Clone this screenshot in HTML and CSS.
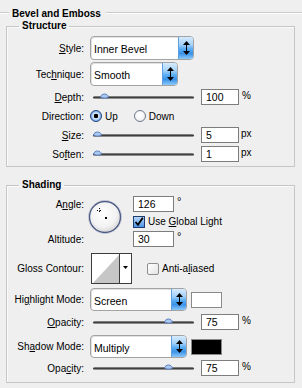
FILE: index.html
```html
<!DOCTYPE html>
<html>
<head>
<meta charset="utf-8">
<title>Bevel and Emboss</title>
<link rel="stylesheet" href="styles.css">
</head>
<body>
<div class="panel">
  <div class="section-title"><span class="lead"></span><span class="title">Bevel and Emboss</span><span class="rule"></span></div>

  <fieldset class="group structure">
    <legend>Structure</legend>

    <div class="row sel-row r-style">
      <span class="lbl"><u>S</u>tyle:</span>
      <div class="select w-style"><span class="val">Inner Bevel</span><span class="spin"><svg width="9" height="22" viewBox="0 0 9 22"><path d="M1 8 L4.5 4 L8 8 Z M1 14 L4.5 18 L8 14 Z" fill="#000"/><rect x="4" y="8" width="1" height="6" fill="#000"/></svg></span></div>
    </div>

    <div class="row sel-row r-tech">
      <span class="lbl">Tec<u>h</u>nique:</span>
      <div class="select w-tech"><span class="val">Smooth</span><span class="spin"><svg width="9" height="22" viewBox="0 0 9 22"><path d="M1 8 L4.5 4 L8 8 Z M1 14 L4.5 18 L8 14 Z" fill="#000"/><rect x="4" y="8" width="1" height="6" fill="#000"/></svg></span></div>
    </div>

    <div class="row r-depth">
      <span class="lbl"><u>D</u>epth:</span>
      <div class="slider"><span class="track"></span><svg class="thumb" style="left:7px" width="9" height="7" viewBox="0 0 9 7"><path d="M0.5 5 C1.5 1 7.5 1 8.5 5 C7 6.5 2 6.5 0.5 5 Z" fill="#a9c7ef" stroke="#5b7fbf" stroke-width="1"/></svg></div>
      <span class="num">100</span><span class="unit">%</span>
    </div>

    <div class="row r-dir">
      <span class="lbl">Direction:</span>
      <span class="radio on"></span><span class="rtext">Up</span>
      <span class="radio off"></span><span class="rtext">Down</span>
    </div>

    <div class="row r-size">
      <span class="lbl"><u>S</u>ize:</span>
      <div class="slider"><span class="track"></span><svg class="thumb" style="left:0px" width="9" height="7" viewBox="0 0 9 7"><path d="M0.5 5 C1.5 1 7.5 1 8.5 5 C7 6.5 2 6.5 0.5 5 Z" fill="#a9c7ef" stroke="#5b7fbf" stroke-width="1"/></svg></div>
      <span class="num">5</span><span class="unit px">px</span>
    </div>

    <div class="row r-soften">
      <span class="lbl">So<u>f</u>ten:</span>
      <div class="slider"><span class="track"></span><svg class="thumb" style="left:0px" width="9" height="7" viewBox="0 0 9 7"><path d="M0.5 5 C1.5 1 7.5 1 8.5 5 C7 6.5 2 6.5 0.5 5 Z" fill="#a9c7ef" stroke="#5b7fbf" stroke-width="1"/></svg></div>
      <span class="num">1</span><span class="unit px">px</span>
    </div>
  </fieldset>

  <fieldset class="group shading">
    <legend>Shading</legend>

    <div class="angle">
      <span class="lbl a-l1">A<u>n</u>gle:</span>
      <svg class="dial" width="34" height="34" viewBox="0 0 34 34">
        <defs>
          <radialGradient id="dg" cx="45%" cy="40%" r="60%">
            <stop offset="0" stop-color="#ffffff"/>
            <stop offset="0.7" stop-color="#f2f2f2"/>
            <stop offset="1" stop-color="#d6d6d6"/>
          </radialGradient>
        </defs>
        <circle cx="17" cy="17" r="15.6" fill="url(#dg)" stroke="#4d5b86" stroke-width="1.6"/>
        <circle cx="17" cy="17" r="16.6" fill="none" stroke="#c9cdd8" stroke-width="0.8"/>
        <g fill="#000">
          <rect x="11" y="8" width="1" height="1"/>
          <rect x="11" y="11" width="1" height="1"/>
          <rect x="9" y="10" width="1" height="1"/>
          <rect x="12" y="10" width="1" height="1"/>
          <rect x="11" y="10" width="1" height="1" fill="#777"/>
          <rect x="17" y="17" width="2" height="2"/>
        </g>
      </svg>
      <div class="a-r1"><span class="num n-angle">126</span><span class="deg">°</span></div>
      <div class="a-r2"><span class="check on"><svg width="10" height="10" viewBox="0 0 10 10"><path d="M1.5 5 L4 7.8 L8.8 0.8" fill="none" stroke="#000" stroke-width="1.8"/></svg></span><span class="ctext">Use <u>G</u>lobal Light</span></div>
      <span class="lbl a-l3">Altitude:</span>
      <div class="a-r3"><span class="num n-angle">30</span><span class="deg">°</span></div>
    </div>

    <div class="row r-gloss">
      <span class="lbl">Gloss Contour:</span>
      <svg class="contour" width="41" height="31" viewBox="0 0 41 31">
        <rect x="0.5" y="0.5" width="40" height="30" fill="#fff" stroke="#3c3c3c"/>
        <polygon points="2,30 28,2 28,30" fill="#c6c6c6"/>
        <line x1="28.5" y1="1" x2="28.5" y2="30" stroke="#3c3c3c"/>
        <polygon points="32,13 37,13 34.5,16" fill="#000"/>
      </svg>
      <span class="check off"></span><span class="ctext">Anti-a<u>l</u>iased</span>
    </div>

    <div class="row sel-row r-hmode">
      <span class="lbl">Hi<u>g</u>hlight Mode:</span>
      <div class="select w-mode"><span class="val">Screen</span><span class="spin"><svg width="9" height="21" viewBox="0 0 9 21"><path d="M1 8 L4.5 4 L8 8 Z M1 13 L4.5 17 L8 13 Z" fill="#000"/><rect x="4" y="8" width="1" height="5" fill="#000"/></svg></span></div>
      <span class="swatch white"></span>
    </div>

    <div class="row r-hop">
      <span class="lbl"><u>O</u>pacity:</span>
      <div class="slider"><span class="track"></span><svg class="thumb" style="left:71px" width="9" height="7" viewBox="0 0 9 7"><path d="M0.5 5 C1.5 1 7.5 1 8.5 5 C7 6.5 2 6.5 0.5 5 Z" fill="#a9c7ef" stroke="#5b7fbf" stroke-width="1"/></svg></div>
      <span class="num">75</span><span class="unit">%</span>
    </div>

    <div class="row sel-row r-smode">
      <span class="lbl">Sh<u>a</u>dow Mode:</span>
      <div class="select w-mode"><span class="val">Multiply</span><span class="spin"><svg width="9" height="21" viewBox="0 0 9 21"><path d="M1 8 L4.5 4 L8 8 Z M1 13 L4.5 17 L8 13 Z" fill="#000"/><rect x="4" y="8" width="1" height="5" fill="#000"/></svg></span></div>
      <span class="swatch black"></span>
    </div>

    <div class="row r-sop">
      <span class="lbl">Opa<u>c</u>ity:</span>
      <div class="slider"><span class="track"></span><svg class="thumb" style="left:71px" width="9" height="7" viewBox="0 0 9 7"><path d="M0.5 5 C1.5 1 7.5 1 8.5 5 C7 6.5 2 6.5 0.5 5 Z" fill="#a9c7ef" stroke="#5b7fbf" stroke-width="1"/></svg></div>
      <span class="num">75</span><span class="unit">%</span>
    </div>
  </fieldset>
</div>
</body>
</html>
```

FILE: styles.css
```css
* { box-sizing: border-box; }
html, body { margin: 0; padding: 0; }
body {
  width: 302px;
  height: 388px;
  background: #efefef;
  font-family: "Liberation Sans", Arial, sans-serif;
  font-size: 10px;
  color: #000;
  overflow: hidden;
}
u { text-decoration: underline; text-underline-offset: 1px; }

.panel { padding-top: 7px; }

.section-title { display: flex; align-items: center; height: 12px; }
.section-title .lead,
.section-title .rule {
  height: 2px;
  border-top: 1px solid #cbcbcb;
  border-bottom: 1px solid #ffffff;
}
.section-title .lead { width: 9px; margin-right: 3px; flex: none; }
.section-title .title { font-weight: bold; white-space: nowrap; }
.section-title .rule { flex: 1; margin-left: 5px; }

.group {
  margin: 1px 0 0 6px;
  width: 289px;
  min-width: 0;
  padding: 0 0 4px 0;
  border: 1px solid #c6c6c6;
  box-shadow: inset 1px 1px 0 #fafafa;
}
.group legend {
  font-weight: bold;
  line-height: 12px;
  padding: 0 3px;
  margin-left: 12px;
}
.group.shading { margin-top: 12px; padding-bottom: 6px; }

.row { display: flex; align-items: center; height: 16px; }
.lbl { width: 77px; flex: none; text-align: right; white-space: nowrap; }

/* select */
.sel-row { height: 24px; }
.select {
  display: flex;
  height: 24px;
  margin-left: 6px;
  border: 1px solid #a3a3a3;
  border-radius: 4px;
  background: #fff;
  overflow: hidden;
  box-shadow: inset 1px 1px 0 #e2e2e2;
}
.select .val { flex: 1; display: flex; align-items: center; padding: 2px 0 0 3px; font-size: 10.5px; }
.select .spin {
  width: 15px;
  flex: none;
  display: flex;
  align-items: center;
  justify-content: center;
  border-left: 1px solid #5f9fe0;
  background: linear-gradient(to bottom, #d7ebfd 0%, #a4d1fa 35%, #59acf2 55%, #3b93ea 75%, #8cc9f8 100%);
}
.w-style { width: 104px; }
.w-tech { width: 88px; }
.w-mode { width: 97px; height: 23px; }
.r-hmode, .r-smode { height: 23px; }

.r-style { margin-top: 4px; }
.r-tech { margin-top: 2px; }
.r-depth { margin-top: 3px; }
.r-dir { margin-top: 3px; }
.r-size { margin-top: 3px; }
.r-soften { margin-top: 3px; }

/* slider */
.slider { position: relative; width: 101px; height: 16px; margin-left: 9px; flex: none; }
.slider .track {
  position: absolute;
  left: 0; right: 0; top: 7px;
  height: 3px;
  border-radius: 2px;
  background: linear-gradient(to bottom, #9a9a9a, #3f3f3f 50%, #b3b3b3);
}
.slider .thumb { position: absolute; top: 3px; }

.num {
  width: 38px;
  height: 16px;
  flex: none;
  margin-left: 7px;
  border: 1px solid #7d7d7d;
  background: #fff;
  padding-left: 4px;
  line-height: 15px;
  font-size: 10.5px;
}
.unit { margin-left: 3px; align-self: flex-start; line-height: 13px; }
.unit.px { margin-left: 2px; }

/* radios */
.radio {
  width: 12px; height: 12px; flex: none;
  border-radius: 50%;
}
.radio.on {
  margin-left: 6px;
  border: 1px solid #24407a;
  background: radial-gradient(circle, #000 0 2px, #e6f1fd 2.6px, #9cc6f2 4px, #3f7fd6 100%);
}
.radio.off {
  margin-left: 16px;
  border: 1px solid #6f7a8c;
  background: radial-gradient(circle at 45% 40%, #ffffff, #f2f2f2 60%, #d3d3d3);
}
.rtext { margin-left: 3px; }

/* angle block */
.angle {
  display: grid;
  grid-template-columns: 77px 49px auto;
  grid-template-rows: 16px 19px 16px;
  margin-top: 5px;
}
.a-l1 { grid-row: 1; grid-column: 1; align-self: center; }
.a-l3 { grid-row: 3; grid-column: 1; align-self: center; }
.dial { grid-column: 2; grid-row: 1 / 4; margin: 4px 0 0 4px; }
.a-r1, .a-r2, .a-r3 { grid-column: 3; display: flex; align-items: center; }
.a-r1 { grid-row: 1; }
.a-r2 { grid-row: 2; }
.a-r3 { grid-row: 3; }
.n-angle { width: 41px; margin-left: 0; }
.deg { margin-left: 3px; align-self: flex-start; line-height: 11px; font-size: 11px; }

.check { width: 12px; height: 12px; flex: none; display: flex; align-items: center; justify-content: center; }
.check.on {
  border: 1px solid #1d3b70;
  background: linear-gradient(to bottom, #b7d8f8, #4f93e2);
}
.check.off {
  margin-left: 15px;
  border: 1px solid #8f8f8f;
  border-radius: 2px;
  background: linear-gradient(to bottom right, #ffffff, #e4e4e4);
}
.ctext { margin-left: 3px; white-space: nowrap; }

.r-gloss { height: 31px; margin-top: 6px; }
.contour { margin-left: 7px; flex: none; }

.r-hmode { margin-top: 4px; }
.r-hop { margin-top: 3px; }
.r-smode { margin-top: 5px; }
.r-sop { margin-top: 2px; }

.swatch { width: 31px; height: 16px; margin-left: 4px; border: 1px solid #8a8a8a; flex: none; }
.swatch.white { background: #fff; }
.swatch.black { background: #000; }
```
